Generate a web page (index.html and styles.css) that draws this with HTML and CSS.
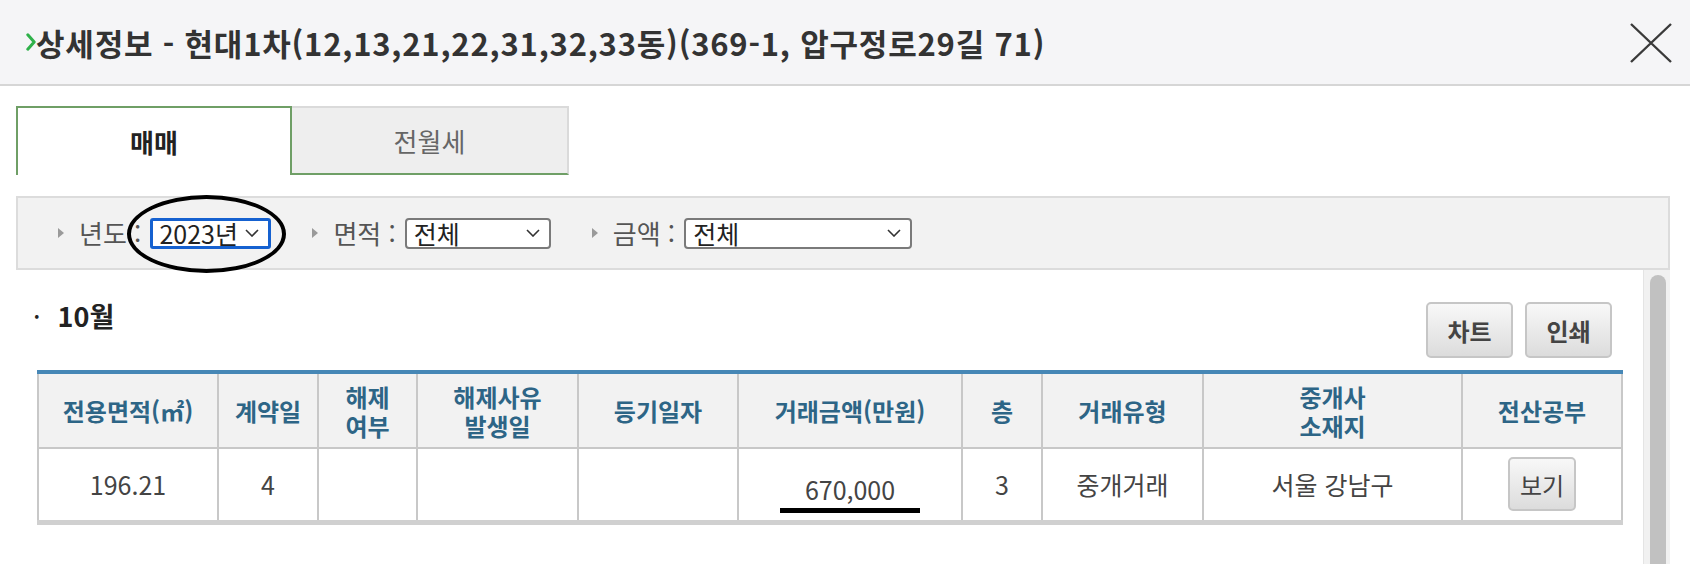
FILE: index.html
```html
<!DOCTYPE html>
<html lang="ko">
<head>
<meta charset="utf-8">
<title>상세정보</title>
<link rel="stylesheet" href="styles.css">
</head>
<body>
<div class="modal">
  <header class="modal-head">
    <h1 class="title"><svg class="chev" viewBox="0 0 10 18" aria-hidden="true"><path d="M1.8 1.8 L8.2 9 L1.8 16.2" fill="none" stroke="#2fb14a" stroke-width="3" stroke-linecap="round" stroke-linejoin="round"/></svg>상세정보 - 현대1차(12,13,21,22,31,32,33동)(369-1, 압구정로29길 71)</h1>
    <button class="close" aria-label="닫기"><svg viewBox="0 0 42 40" aria-hidden="true"><path d="M1 1 L41 39 M41 1 L1 39" stroke="#3a3a3a" stroke-width="2.4" fill="none"/></svg></button>
  </header>
  <div class="content">
    <div class="tabs">
      <div class="tab active">매매</div>
      <div class="tab">전월세</div>
    </div>
    <div class="filters">
      <div class="fgroup">
        <span class="tri"></span><span class="flabel">년도 :</span>
        <span class="sel sel-year focus circled">2023년<svg class="arrow" viewBox="0 0 14 8"><path d="M1 1 L7 7 L13 1" fill="none" stroke="#333" stroke-width="1.6"/></svg></span>
      </div>
      <div class="fgroup">
        <span class="tri"></span><span class="flabel">면적 :</span>
        <span class="sel sel-area">전체<svg class="arrow" viewBox="0 0 14 8"><path d="M1 1 L7 7 L13 1" fill="none" stroke="#333" stroke-width="1.6"/></svg></span>
      </div>
      <div class="fgroup">
        <span class="tri"></span><span class="flabel">금액 :</span>
        <span class="sel sel-price">전체<svg class="arrow" viewBox="0 0 14 8"><path d="M1 1 L7 7 L13 1" fill="none" stroke="#333" stroke-width="1.6"/></svg></span>
      </div>
    </div>
    <div class="scroll">
      <div class="scroll-main">
        <div class="toolbar">
          <div class="month"><span class="dot">·</span>10월</div>
          <div class="btns">
            <button class="btn">차트</button>
            <button class="btn">인쇄</button>
          </div>
        </div>
        <table class="deals">
          <colgroup>
            <col class="c1"><col class="c2"><col class="c3"><col class="c4"><col class="c5">
            <col class="c6"><col class="c7"><col class="c8"><col class="c9"><col class="c10">
          </colgroup>
          <thead>
            <tr>
              <th>전용면적(㎡)</th>
              <th>계약일</th>
              <th><span class="ln">해제</span><span class="ln">여부</span></th>
              <th><span class="ln">해제사유</span><span class="ln">발생일</span></th>
              <th>등기일자</th>
              <th>거래금액(만원)</th>
              <th>층</th>
              <th>거래유형</th>
              <th><span class="ln">중개사</span><span class="ln">소재지</span></th>
              <th>전산공부</th>
            </tr>
          </thead>
          <tbody>
            <tr>
              <td>196.21</td>
              <td>4</td>
              <td></td>
              <td></td>
              <td></td>
              <td><span class="price">670,000</span></td>
              <td>3</td>
              <td>중개거래</td>
              <td>서울 강남구</td>
              <td><button class="btn btn-view">보기</button></td>
            </tr>
          </tbody>
        </table>
      </div>
      <div class="scrollbar"><div class="thumb"></div></div>
    </div>
  </div>
</div>
</body>
</html>
```

FILE: styles.css
```css
* { box-sizing: border-box; }
html, body { margin: 0; padding: 0; background: #fff; }
body {
  font-family: "Noto Sans CJK KR", "Noto Sans", sans-serif;
  color: #333;
  width: 1690px;
  height: 564px;
  overflow: hidden;
}

.modal-head {
  height: 86px;
  background: #f5f5f7;
  border-bottom: 2px solid #d6d6d6;
  display: flex;
  align-items: center;
  justify-content: space-between;
  padding: 0 18px 0 26px;
}
.title {
  margin: 0;
  font-size: 31px;
  letter-spacing: 0.8px;
  font-weight: 700;
  color: #333;
  display: flex;
  align-items: center;
  line-height: 1;
}
.chev { width: 10px; height: 18px; margin-right: 0; flex: none; }
.close {
  width: 42px; height: 40px;
  border: 0; background: none; padding: 0;
  margin-top: 2px;
}
.close svg { width: 42px; height: 40px; display: block; }

.content { padding: 20px 20px 0 16px; }

.tabs { display: flex; height: 69px; }
.tab {
  display: flex; align-items: center; justify-content: center;
  font-size: 26px;
}
.tab.active {
  width: 276px;
  background: #fff;
  border: 2px solid #6f9f66;
  border-bottom: none;
  font-weight: 700;
  color: #222;
}
.tab:not(.active) {
  width: 277px;
  background: #eeeeee;
  border-top: 2px solid #dadada;
  border-right: 2px solid #dadada;
  border-bottom: 2px solid #6f9f66;
  color: #666;
}

.filters {
  margin-top: 21px;
  height: 74px;
  background: #f2f2f2;
  border: 2px solid #dcdcdc;
  display: flex;
  align-items: center;
  padding-left: 40px;
  gap: 41px;
}
.fgroup { display: flex; align-items: center; }
.tri {
  width: 0; height: 0;
  border-left: 6px solid #9a9a9a;
  border-top: 5px solid transparent;
  border-bottom: 5px solid transparent;
  margin-right: 15px;
}
.flabel { font-size: 26px; color: #555; margin-right: 9px; white-space: pre; line-height: 1; }
.sel {
  position: relative;
  display: flex; align-items: center; justify-content: space-between;
  height: 31px;
  background: #fff;
  border: 2px solid #7a7a7a;
  border-radius: 4px;
  font-size: 25px;
  color: #222;
  padding: 0 9px 0 7px;
  line-height: 1;
}
.sel .arrow { width: 14px; height: 8px; flex: none; }
.sel-year { width: 121px; }
.sel-area { width: 146px; }
.sel-price { width: 228px; }
.sel.focus { border: 3px solid #1561d0; border-radius: 3px; padding-left: 6px; }
.circled::after {
  content: "";
  position: absolute;
  left: -26px; right: -18px; top: -26px; bottom: -27px;
  border: 4.5px solid #000;
  border-radius: 50%;
  pointer-events: none;
}

.scroll { display: flex; height: 294px; }
.scroll-main { flex: 1; }
.scrollbar {
  width: 27px;
  background: #f1f1f1;
  border-left: 1px solid #e4e4e4;
  padding: 5px 4px 0 6px;
}
.thumb { height: 100%; background: #c1c1c1; border-radius: 8px 8px 0 0; }

.toolbar {
  display: flex;
  justify-content: space-between;
  align-items: flex-start;
  padding: 32px 31px 0 17px;
}
.month {
  font-size: 27px; font-weight: 700; color: #222;
  line-height: 30px; margin-top: -1px;
}
.dot { font-weight: 400; margin-right: 17px; }
.btns { display: flex; gap: 12px; }
.btn {
  font-family: inherit;
  width: 87px; height: 56px;
  background: linear-gradient(#f8f8f8, #dcdcdc);
  border: 2px solid #c6c6c6;
  border-radius: 5px;
  font-size: 24px;
  font-weight: 700;
  color: #444;
  padding: 0;
}

.deals {
  margin: 12px 0 0 21px;
  width: 1584px;
  table-layout: fixed;
  border-collapse: collapse;
  border-top: 4px solid #4687b6;
  border-bottom: 5px solid #d0d0d0;
}
.c1 { width: 180px; } .c2 { width: 100px; } .c3 { width: 99px; } .c4 { width: 161px; }
.c5 { width: 160px; } .c6 { width: 224px; } .c7 { width: 80px; } .c8 { width: 161px; }
.c9 { width: 259px; } .c10 { width: 160px; }
.deals th, .deals td { border: 2px solid #c8c8c8; text-align: center; padding: 0; }
.deals th {
  height: 76px;
  background: #f2f2f2;
  color: #2d6586;
  font-size: 24px;
  font-weight: 700;
  line-height: 29px;
}
.ln { display: block; }
.deals td {
  height: 74px;
  font-size: 25px;
  color: #444;
}
.price {
  display: inline-block;
  padding: 7px 25px 5px;
  border-bottom: 5px solid #000;
  line-height: 28px;
  margin-top: 12px;
}
.btn-view { width: 68px; height: 54px; font-weight: 400; vertical-align: middle; }
```
